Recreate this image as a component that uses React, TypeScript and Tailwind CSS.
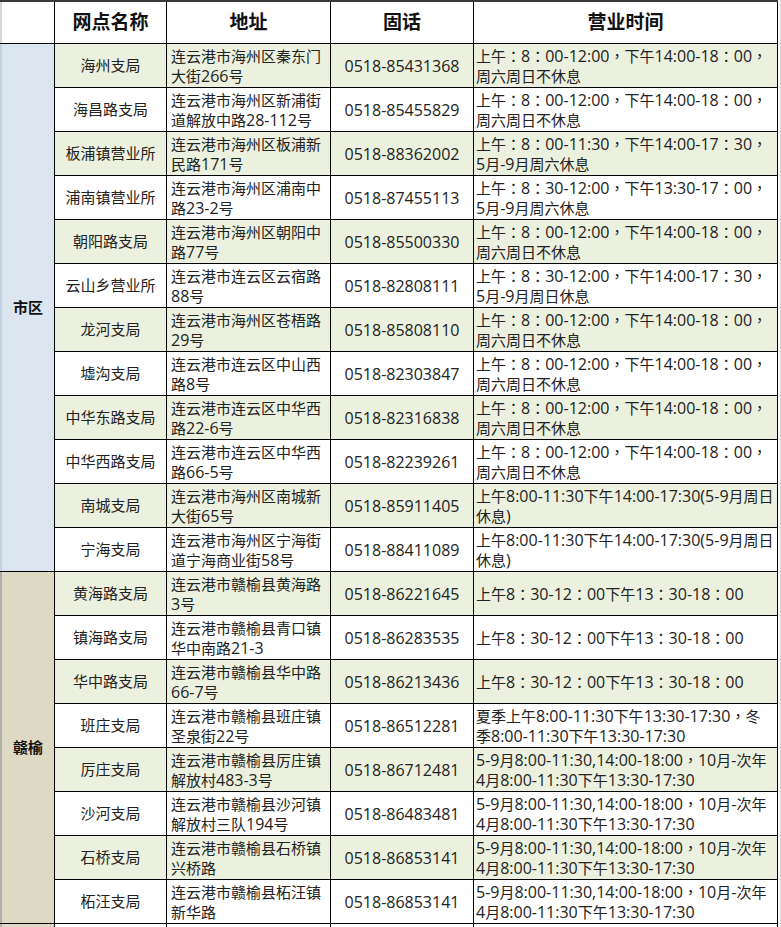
import React from "react";

type Row = { name: string; addr: [string, string]; phone: string; hours: string[] };

const H1 = ["上午：8：00-12:00，下午14:00-18：00，", "周六周日不休息"];
const H2 = ["上午8:00-11:30下午14:00-17:30(5-9月周日", "休息)"];
const H3 = ["上午8：30-12：00下午13：30-18：00"];
const H4 = ["5-9月8:00-11:30,14:00-18:00，10月-次年", "4月8:00-11:30下午13:30-17:30"];

const city: Row[] = [
  { name: "海州支局", addr: ["连云港市海州区秦东门", "大街266号"], phone: "0518-85431368", hours: H1 },
  { name: "海昌路支局", addr: ["连云港市海州区新浦街", "道解放中路28-112号"], phone: "0518-85455829", hours: H1 },
  { name: "板浦镇营业所", addr: ["连云港市海州区板浦新", "民路171号"], phone: "0518-88362002", hours: ["上午：8：00-11:30，下午14:00-17：30，", "5月-9月周六休息"] },
  { name: "浦南镇营业所", addr: ["连云港市海州区浦南中", "路23-2号"], phone: "0518-87455113", hours: ["上午：8：30-12:00，下午13:30-17：00，", "5月-9月周六休息"] },
  { name: "朝阳路支局", addr: ["连云港市海州区朝阳中", "路77号"], phone: "0518-85500330", hours: H1 },
  { name: "云山乡营业所", addr: ["连云港市连云区云宿路", "88号"], phone: "0518-82808111", hours: ["上午：8：30-12:00，下午14:00-17：30，", "5月-9月周日休息"] },
  { name: "龙河支局", addr: ["连云港市海州区苍梧路", "29号"], phone: "0518-85808110", hours: H1 },
  { name: "墟沟支局", addr: ["连云港市连云区中山西", "路8号"], phone: "0518-82303847", hours: H1 },
  { name: "中华东路支局", addr: ["连云港市连云区中华西", "路22-6号"], phone: "0518-82316838", hours: H1 },
  { name: "中华西路支局", addr: ["连云港市连云区中华西", "路66-5号"], phone: "0518-82239261", hours: H1 },
  { name: "南城支局", addr: ["连云港市海州区南城新", "大街65号"], phone: "0518-85911405", hours: H2 },
  { name: "宁海支局", addr: ["连云港市海州区宁海街", "道宁海商业街58号"], phone: "0518-88411089", hours: H2 },
];

const ganyu: Row[] = [
  { name: "黄海路支局", addr: ["连云港市赣榆县黄海路", "3号"], phone: "0518-86221645", hours: H3 },
  { name: "镇海路支局", addr: ["连云港市赣榆县青口镇", "华中南路21-3"], phone: "0518-86283535", hours: H3 },
  { name: "华中路支局", addr: ["连云港市赣榆县华中路", "66-7号"], phone: "0518-86213436", hours: H3 },
  { name: "班庄支局", addr: ["连云港市赣榆县班庄镇", "圣泉街22号"], phone: "0518-86512281", hours: ["夏季上午8:00-11:30下午13:30-17:30，冬", "季8:00-11:30下午13:30-17:30"] },
  { name: "厉庄支局", addr: ["连云港市赣榆县厉庄镇", "解放村483-3号"], phone: "0518-86712481", hours: H4 },
  { name: "沙河支局", addr: ["连云港市赣榆县沙河镇", "解放村三队194号"], phone: "0518-86483481", hours: H4 },
  { name: "石桥支局", addr: ["连云港市赣榆县石桥镇", "兴桥路"], phone: "0518-86853141", hours: H4 },
  { name: "柘汪支局", addr: ["连云港市赣榆县柘汪镇", "新华路"], phone: "0518-86853141", hours: H4 },
];

function Mixed({ text }: { text: string }) {
  const parts = text.match(/[\x20-\x7E]+|[：，]+|[^\x20-\x7E：，]+/g) || [];
  return (
    <span className="block leading-[20px]">
      {parts.map((p, i) => {
        if (/^[\x20-\x7E]+$/.test(p))
          return (
            <span key={i} className="text-[16px] leading-[20px]">
              {p}
            </span>
          );
        if (/^[：，]+$/.test(p))
          return (
            <span key={i} className="font-['Noto_Sans_CJK_TC',sans-serif]">
              {p}
            </span>
          );
        return <span key={i}>{p}</span>;
      })}
    </span>
  );
}

function Cells({ r, green }: { r: Row; green: boolean }) {
  const bg = green ? "bg-[#ebf1de]" : "bg-white";
  return (
    <>
      <div className={`${bg} flex items-center justify-center whitespace-nowrap`}>{r.name}</div>
      <div className={`${bg} flex flex-col justify-center pl-[4px] whitespace-nowrap`}>
        <Mixed text={r.addr[0]} />
        <Mixed text={r.addr[1]} />
      </div>
      <div className={`${bg} flex items-center justify-center whitespace-nowrap text-[16px]`}>{r.phone}</div>
      <div className={`${bg} flex flex-col justify-center pl-[2px] whitespace-nowrap overflow-hidden`}>
        {r.hours.map((h, i) => (
          <Mixed key={i} text={h} />
        ))}
      </div>
    </>
  );
}

export default function App() {
  return (
    <div
      className="w-[781px] h-[927px] overflow-hidden bg-white flex text-[15px] text-[#222]"
      style={{ fontFamily: '"Open Sans", "Noto Sans CJK SC", sans-serif' }}
    >
      <div className="w-[778px] shrink-0">
        <div className="h-[2px] bg-[#3a3a3a]" />
        <div className="grid grid-cols-[54px_111px_163px_142px_303px] grid-rows-[41px_repeat(20,43px)_6px] gap-px bg-black border-r border-black">
          <div className="bg-white border-l-2 border-[#d4d8dc]" />
          <div className="bg-white flex items-center justify-center text-[19px] font-bold text-[#111]">网点名称</div>
          <div className="bg-white flex items-center justify-center text-[19px] font-bold text-[#111]">地址</div>
          <div className="bg-white flex items-center justify-center text-[19px] font-bold text-[#111]">固话</div>
          <div className="bg-white flex items-center justify-center text-[19px] font-bold text-[#111]">营业时间</div>

          <div className="row-span-12 bg-[#dce6f1] border-l-2 border-[#c3d2e2] flex items-center justify-center font-bold text-[#111]">
            市区
          </div>
          {city.map((r, i) => (
            <Cells key={r.name} r={r} green={i % 2 === 0} />
          ))}

          <div className="row-span-8 bg-[#ddd9c4] border-l-2 border-[#b0b0aa] flex items-center justify-center font-bold text-[#111]">
            赣榆
          </div>
          {ganyu.map((r, i) => (
            <Cells key={r.name + i} r={r} green={i % 2 === 0} />
          ))}

          <div className="bg-[#ddd9c4] border-l-2 border-[#b0b0aa]" />
          <div className="bg-white" />
          <div className="bg-white" />
          <div className="bg-white" />
          <div className="bg-white" />
        </div>
      </div>
      <div className="w-[3px] shrink-0 flex justify-end">
        <div className="w-px h-full bg-[#d8d8d8]" />
      </div>
    </div>
  );
}
